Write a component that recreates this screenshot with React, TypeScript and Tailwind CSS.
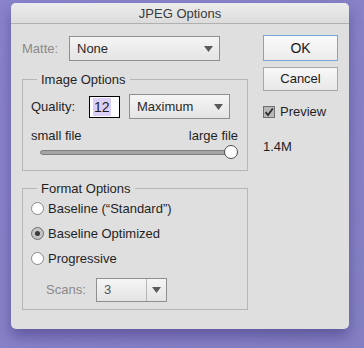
import { useState } from 'react'

function Dropdown({ label, width, divider = false, disabled = false }: { label: string; width: string; divider?: boolean; disabled?: boolean }) {
  return (
    <div
      className={`${width} h-full flex items-center border border-[#8f8f8f] bg-gradient-to-b from-[#f5f5f5] to-[#e4e4e4] text-[13px] ${
        disabled ? 'text-[#555]' : 'text-[#2a2a2a]'
      }`}
    >
      <span className="flex-1 pl-[7px]">{label}</span>
      {divider && <span className="h-full w-px bg-[#b5b5b5]" />}
      <span className={`flex items-center justify-center h-full ${divider ? 'w-[19px]' : 'w-[22px]'}`}>
        <svg width="9" height="6" viewBox="0 0 9 6">
          <path d="M0 0 H9 L4.5 6 Z" fill="#5a5a5a" />
        </svg>
      </span>
    </div>
  )
}

function Radio({ checked, label }: { checked?: boolean; label: string }) {
  return (
    <div className="h-[25px] flex items-center pl-[8px] gap-[4px] text-[13px] text-[#1f1f1f]">
      <span
        className={`w-[13px] h-[13px] rounded-full border flex items-center justify-center ${
          checked ? 'border-[#6e6e6e] bg-[#c4c4c4]' : 'border-[#8a8a8a] bg-white'
        }`}
      >
        {checked && <span className="w-[5px] h-[5px] rounded-full bg-[#3a3a3a]" />}
      </span>
      <span>{label}</span>
    </div>
  )
}

export default function App() {
  const [preview, setPreview] = useState(true)

  return (
    <div className="w-[364px] h-[348px] bg-gradient-to-br from-[#8a84cc] to-[#8580c4] pl-[11px] pt-[3px] font-['Liberation_Sans',Arial,sans-serif]">
      <div className="w-[338px] h-[326px] bg-[#dfdfdf] rounded-[5px] shadow-[0_8px_14px_rgba(50,40,110,0.45)] overflow-hidden">
        {/* Title bar */}
        <div className="h-[21px] pt-[2px] border-b border-[#b0b0b0] bg-gradient-to-b from-[#ececec] to-[#dcdcdc] flex items-center justify-center text-[13px] text-[#3a3a3a]">
          JPEG Options
        </div>

        <div className="flex pl-[11px] pt-[12px]">
          {/* Left column */}
          <div className="w-[226px]">
            <div className="h-[25px] flex items-center">
              <span className="w-[47px] text-[13px] text-[#8a8a8a]">Matte:</span>
              <Dropdown label="None" width="w-[151px]" />
            </div>

            {/* Image Options */}
            <fieldset className="mt-[11px] h-[99px] border border-[#b6b6b6]">
              <legend className="ml-[14px] px-[4px] text-[13px] leading-[15px] text-[#1f1f1f]">Image Options</legend>
              <div className="h-[25px] mt-[7px] pl-[8px] flex items-center text-[13px] text-[#1f1f1f]">
                <span className="w-[58px]">Quality:</span>
                <div className="w-[31px] h-[22px] border border-black bg-white flex items-center pl-[3px]">
                  <span className="bg-[#dccff7] px-px leading-[18px] text-[14px]">12</span>
                </div>
                <div className="ml-[9px] h-full">
                  <Dropdown label="Maximum" width="w-[101px]" />
                </div>
              </div>
              <div className="mt-[9px] pl-[8px] pr-[9px] flex justify-between text-[13px] leading-[15px] text-[#1f1f1f]">
                <span>small file</span>
                <span>large file</span>
              </div>
              <div className="mt-[2px] ml-[17px] w-[198px] h-[14px] relative flex items-center">
                <div className="w-full h-[5px] rounded-full bg-[#a4a4a4] border border-[#7e7e7e]" />
                <div className="absolute right-0 top-0 w-[14px] h-[14px] rounded-full bg-white border border-[#4e4e4e]" />
              </div>
            </fieldset>

            {/* Format Options */}
            <fieldset className="mt-[10px] border border-[#b6b6b6] pb-[7px]">
              <legend className="ml-[14px] px-[4px] text-[13px] leading-[15px] text-[#1f1f1f]">Format Options</legend>
              <Radio label={'Baseline (\u201cStandard\u201d)'} />
              <Radio checked label="Baseline Optimized" />
              <Radio label="Progressive" />
              <div className="mt-[7px] h-[24px] pl-[23px] flex items-center">
                <span className="w-[50px] text-[13px] text-[#8a8a8a]">Scans:</span>
                <Dropdown label="3" width="w-[71px]" divider disabled />
              </div>
            </fieldset>
          </div>

          {/* Right column */}
          <div className="ml-[15px] w-[75px] -mt-[1px] text-[13px] text-[#1f1f1f]">
            <button className="w-full h-[26px] border border-[#7ba3d6] bg-gradient-to-b from-[#fafafa] to-[#ececec] text-[14px] text-[#1a1a1a]">
              OK
            </button>
            <button className="mt-[6px] w-full h-[24px] border border-[#a8a8a8] bg-gradient-to-b from-[#f8f8f8] to-[#e8e8e8] text-[13px] text-[#1a1a1a]">
              Cancel
            </button>
            <label className="mt-[11px] flex items-center gap-[5px] cursor-default" onClick={() => setPreview(!preview)}>
              <span className="w-[12px] h-[12px] border border-[#6f6f6f] bg-[#b9b9b9] flex items-center justify-center">
                {preview && (
                  <svg width="10" height="10" viewBox="0 0 10 10">
                    <path d="M1.5 5.2 L4 8 L8.8 1.5" fill="none" stroke="#2e2e2e" strokeWidth="1.8" />
                  </svg>
                )}
              </span>
              <span>Preview</span>
            </label>
            <div className="mt-[17px] leading-[15px]">1.4M</div>
          </div>
        </div>
      </div>
    </div>
  )
}
